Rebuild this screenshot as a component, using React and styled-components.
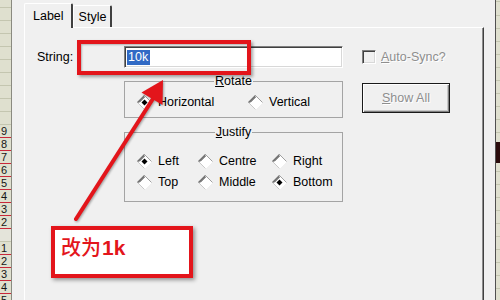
import React from 'react';
import styled, { createGlobalStyle } from 'styled-components';

const Global = createGlobalStyle`
  html, body { margin: 0; padding: 0; width: 500px; height: 300px; overflow: hidden; background: #f0f0f0; }
  body { font-family: "Liberation Sans", Arial, sans-serif; }
  * { box-sizing: border-box; }
`;

const RED = '#e3151b';

const Screen = styled.div`
  position: relative;
  display: flex;
  width: 500px;
  height: 300px;
  overflow: hidden;
`;

const Ruler = styled.div`
  flex: none;
  width: 12px;
  background: #dfe0cf;
  border-right: 1px solid #8a8a80;
  overflow: hidden;
`;

const RulerCells = styled.div`
  display: flex;
  flex-direction: column;
  margin-top: -5px;
`;

const RulerCell = styled.div`
  flex: none;
  height: 13px;
  border-bottom: 1px solid ${(p) => (p.$num ? '#c8283a' : '#c4c6b0')};
  background: ${(p) => (p.$blank ? '#e4e4da' : 'transparent')};
  font: 11px/12px "Liberation Sans", Arial, sans-serif;
  color: #151515;
  padding-left: 1px;
`;

const RightStrip = styled.div`
  flex: none;
  width: 4px;
  background: repeating-linear-gradient(to bottom, #dfe0cf 0 12px, #c4c6b0 12px 13px);
  background-position: 0 3px;
  display: flex;
  flex-direction: column;
`;

const Blob = styled.div`
  margin-top: 142px;
  height: 21px;
  background: #2b0c0c;
`;

const Dialog = styled.div`
  flex: 1;
  min-width: 0;
  background: #f0f0f0;
  border-right: 1px solid #505050;
  padding: 3px 11px 0 12px;
  display: flex;
  flex-direction: column;
`;

const TabStrip = styled.div`
  display: flex;
  align-items: flex-end;
  height: 24px;
  position: relative;
  z-index: 1;
`;

const Tab = styled.div`
  height: ${(p) => (p.$active ? 25 : 22)}px;
  margin-bottom: ${(p) => (p.$active ? -1 : 0)}px;
  padding: ${(p) => (p.$active ? '0 7px 0 8px' : '0 4px 0 5px')};
  background: #f0f0f0;
  border-top: 1px solid #fff;
  border-left: 1px solid #fff;
  border-right: 2px solid #404040;
  border-radius: 2px 2px 0 0;
  display: flex;
  align-items: center;
  font-size: 12.5px;
  color: #000;
`;

const TabPage = styled.div`
  flex: 1;
  background: #f0f0f0;
  border-top: 1px solid #fff;
  border-left: 1px solid #fff;
  border-right: 1px solid #404040;
  box-shadow: inset -1px 0 0 #8c8c8c;
  padding: 18px 0 0 12px;
  display: grid;
  grid-template-columns: 68px 219px 88px;
  column-gap: 19px;
  align-content: start;
  align-items: start;
  font-size: 12.5px;
  color: #000;
`;

const FieldLabel = styled.div`
  align-self: center;
  white-space: nowrap;
`;

const TextBox = styled.div`
  height: 22px;
  background: #fff;
  border-top: 1px solid #808080;
  border-left: 1px solid #808080;
  border-bottom: 1px solid #fff;
  border-right: 1px solid #fff;
  box-shadow: inset 1px 1px 0 #404040, inset -1px -1px 0 #d8d8d8;
  padding: 0 0 0 2px;
  display: flex;
  align-items: center;
`;

const Selected = styled.span`
  background: #316ac5;
  color: #fff;
  line-height: 15px;
  padding: 0 2px 0 1px;
`;

const CheckRow = styled.div`
  align-self: center;
  display: flex;
  align-items: center;
  gap: 5px;
  white-space: nowrap;
`;

const CheckBox = styled.span`
  width: 14px;
  height: 14px;
  border-top: 1px solid #808080;
  border-left: 1px solid #808080;
  border-bottom: 1px solid #fff;
  border-right: 1px solid #fff;
  box-shadow: inset 1px 1px 0 #404040, inset -1px -1px 0 #d8d8d8;
  background: #f0f0f0;
`;

const Disabled = styled.span`
  color: #8e8e8e;
  text-shadow: 1px 1px 0 #fff;
`;

const Group = styled.fieldset`
  grid-column: 2;
  margin: ${(p) => p.$mt}px 0 0;
  min-width: 0;
  border: 1px solid #a4a4a4;
  padding: ${(p) => p.$pad};
`;

const Legend = styled.legend`
  margin: 0 auto;
  padding: 0 1px;
  line-height: 14px;
  font-size: 12.5px;
`;

const RadioGrid = styled.div`
  display: grid;
  grid-template-columns: ${(p) => p.$cols};
  row-gap: 5px;
  padding-left: 12px;
`;

const RadioItem = styled.div`
  height: 16px;
  display: flex;
  align-items: center;
  gap: 6px;
  white-space: nowrap;
`;

const Button = styled.div`
  grid-column: 3;
  margin-top: 15px;
  height: 30px;
  border: 1px solid #1a1a1a;
  box-shadow: inset 1px 1px 0 #fff, inset -1px -1px 0 #808080, inset -2px -2px 0 #c8c8c8;
  background: #f0f0f0;
  display: flex;
  align-items: center;
  justify-content: center;
`;

const Frame = styled.div`
  position: absolute;
  left: 77px;
  top: 40px;
  width: 174px;
  height: 35px;
  border: 4px solid ${RED};
  box-shadow: 2px 2px 3px rgba(0, 0, 0, 0.35), inset 1px 1px 2px rgba(0, 0, 0, 0.25);
  pointer-events: none;
`;

const ArrowSvg = styled.svg`
  position: absolute;
  left: 0;
  top: 0;
  pointer-events: none;
  filter: drop-shadow(1px 1px 1px rgba(0, 0, 0, 0.35));
`;

const Callout = styled.div`
  position: absolute;
  left: 51px;
  top: 226px;
  width: 142px;
  height: 52px;
  background: #fff;
  border: 4px solid ${RED};
  box-shadow: 2px 2px 4px rgba(0, 0, 0, 0.4);
  padding: 5px 0 0 6px;
  color: ${RED};
  font-size: 20px;
  line-height: 24px;
  white-space: nowrap;
`;

const Cjk = styled.span`
  font-family: "Noto Sans CJK SC", "Liberation Sans", sans-serif;
  font-weight: 500;
`;

const Bold = styled.span`
  font-family: "Liberation Sans", Arial, sans-serif;
  font-weight: 700;
  font-size: 21px;
  margin-left: 1px;
`;

function Diamond({ checked }) {
  return (
    <svg width="15" height="15" viewBox="0 0 15 15">
      <polygon points="7.5,0.5 14.5,7.5 7.5,14.5 0.5,7.5" fill="#fff" />
      <path d="M7.5 14.5 L14.5 7.5" stroke="#ffffff" strokeWidth="1" fill="none" />
      <path d="M0.5 7.5 L7.5 14.5" stroke="#c8c8c8" strokeWidth="1" fill="none" />
      <path d="M7.5 0.5 L14.5 7.5" stroke="#a0a0a0" strokeWidth="1" fill="none" />
      <path d="M0.5 7.5 L7.5 0.5" stroke="#707070" strokeWidth="1.2" fill="none" />
      <path d="M2 7.5 L7.5 2" stroke="#303030" strokeWidth="1" fill="none" />
      {checked && <polygon points="7.5,4.5 10.5,7.5 7.5,10.5 4.5,7.5" fill="#000" />}
    </svg>
  );
}

function Radio({ label, checked }) {
  return (
    <RadioItem>
      <Diamond checked={checked} />
      <span>{label}</span>
    </RadioItem>
  );
}

const rulerCells = [
  '', '', '', '', '', '', '', '', '', '',
  '9', '8', '7', '6', '5', '4', '3', '2', 'blank', '1', '2', '3', '4', '5',
];

export default function App() {
  return (
    <>
      <Global />
      <Screen>
        <Ruler>
          <RulerCells>
            {rulerCells.map((c, i) => (
              <RulerCell key={i} $num={c !== '' && c !== 'blank'} $blank={c === 'blank'}>
                {c === 'blank' ? '' : c}
              </RulerCell>
            ))}
          </RulerCells>
        </Ruler>
        <Dialog>
          <TabStrip>
            <Tab $active>Label</Tab>
            <Tab>Style</Tab>
          </TabStrip>
          <TabPage>
            <FieldLabel>String:</FieldLabel>
            <TextBox>
              <Selected>10k</Selected>
            </TextBox>
            <CheckRow>
              <CheckBox />
              <Disabled>
                <u>A</u>uto-Sync?
              </Disabled>
            </CheckRow>

            <Group $mt={6} $pad="6px 0 7px 0">
              <Legend>
                <u>R</u>otate
              </Legend>
              <RadioGrid $cols="111px auto">
                <Radio label="Horizontal" checked />
                <Radio label="Vertical" />
              </RadioGrid>
            </Group>
            <Button>
              <Disabled>
                <u>S</u>how All
              </Disabled>
            </Button>

            <Group $mt={7} $pad="14px 0 11px 0">
              <Legend>
                <u>J</u>ustify
              </Legend>
              <RadioGrid $cols="61px 74px auto">
                <Radio label="Left" checked />
                <Radio label="Centre" />
                <Radio label="Right" />
                <Radio label="Top" />
                <Radio label="Middle" />
                <Radio label="Bottom" checked />
              </RadioGrid>
            </Group>
          </TabPage>
        </Dialog>
        <RightStrip>
          <Blob />
        </RightStrip>

        <Frame />
        <ArrowSvg width="500" height="300" viewBox="0 0 500 300">
          <line x1="76" y1="219" x2="156" y2="94" stroke={RED} strokeWidth="4" strokeLinecap="round" />
          <polygon points="163,80 162.5,105 141.5,92.5" fill={RED} />
        </ArrowSvg>
        <Callout>
          <Cjk>改为</Cjk>
          <Bold>1k</Bold>
        </Callout>
      </Screen>
    </>
  );
}
